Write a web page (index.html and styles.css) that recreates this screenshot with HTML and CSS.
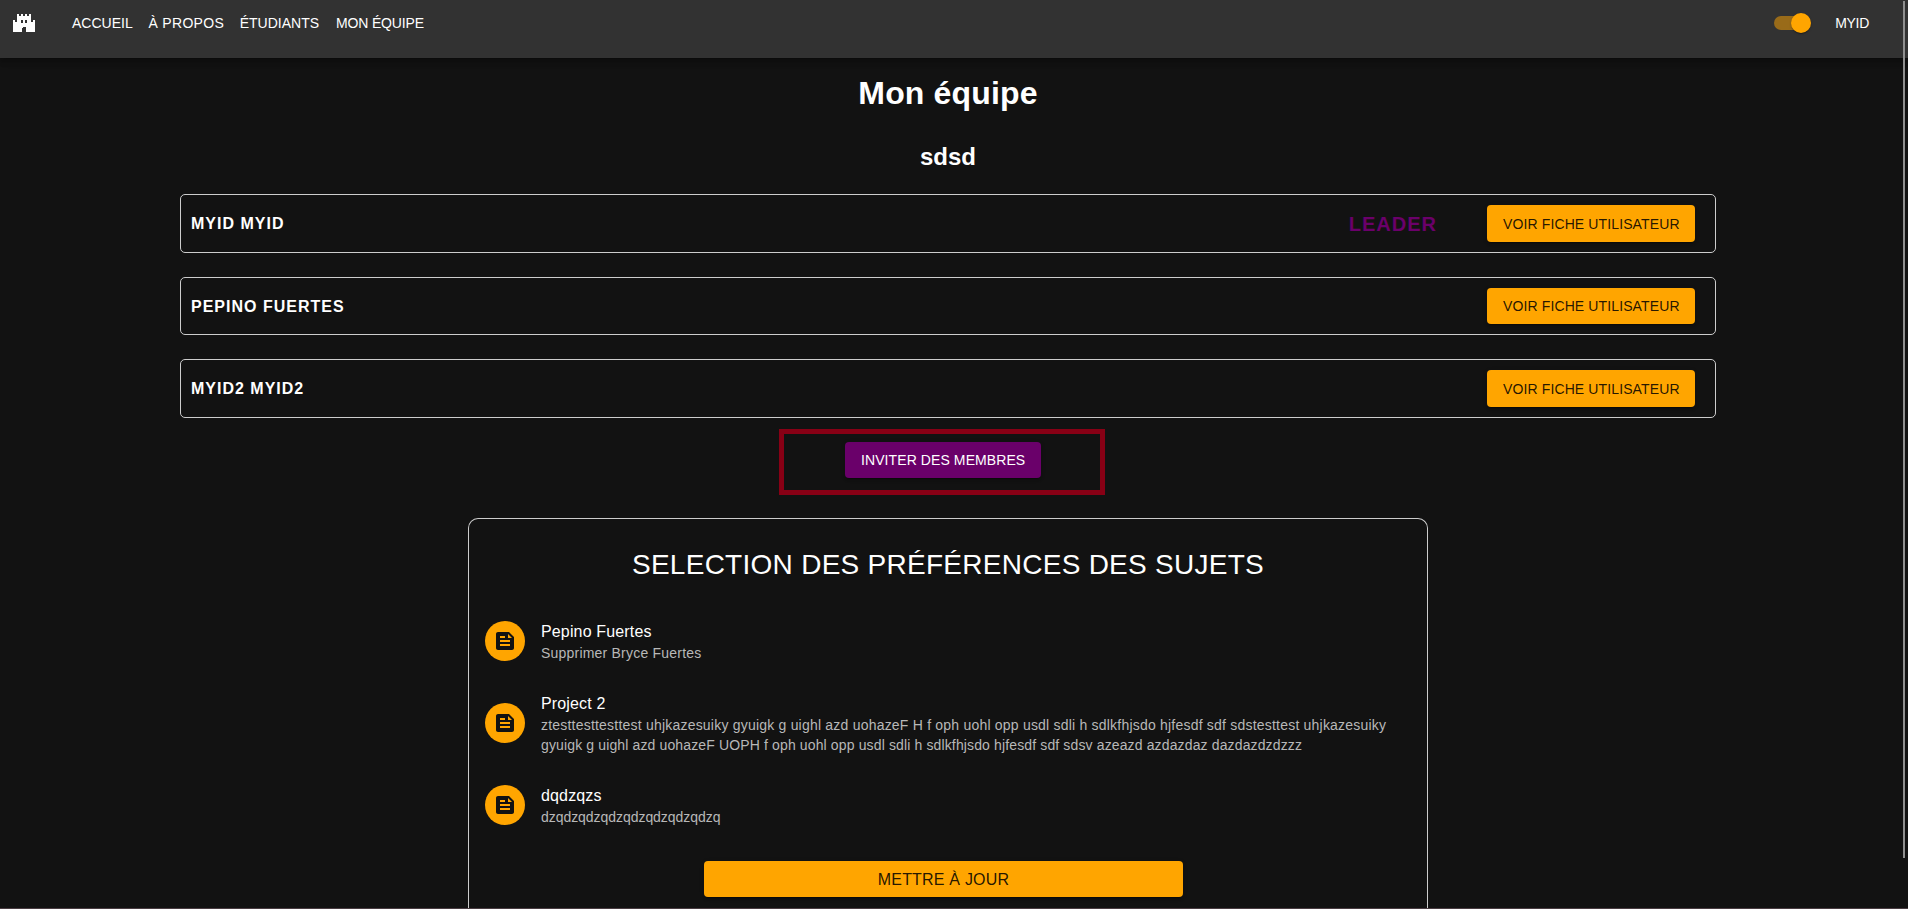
FILE: index.html
```html
<!DOCTYPE html>
<html lang="fr">
<head>
<meta charset="utf-8">
<title>Mon équipe</title>
<link rel="stylesheet" href="styles.css">
</head>
<body>
<header class="navbar">
  <a class="logo" aria-label="Accueil"><svg width="22" height="18" viewBox="0 0 22 18" shape-rendering="crispEdges"><path fill="#fff" fill-rule="evenodd" d="M4 0h2v2h2V0h2v2h2V0h2v2h2V0h2v8h2V6h2v12h-9v-4l-1-1h-2l-1 1v4H0V6h2v2h2zM8 6v3h2V6zM12 6v3h2V6z"/></svg></a>
  <nav class="links"><a>ACCUEIL</a><a class="about">À PROPOS</a><a>ÉTUDIANTS</a><a class="team">MON ÉQUIPE</a></nav>
  <span class="switch"><span class="thumb"></span></span>
  <a class="account">MYID</a>
</header>
<main class="page">
  <h1>Mon équipe</h1>
  <h2>sdsd</h2>
  <section class="members">
    <div class="member"><span class="name">MYID MYID</span><span class="leader">LEADER</span><button class="btn">VOIR FICHE UTILISATEUR</button></div>
    <div class="member"><span class="name">PEPINO FUERTES</span><button class="btn">VOIR FICHE UTILISATEUR</button></div>
    <div class="member"><span class="name">MYID2 MYID2</span><button class="btn">VOIR FICHE UTILISATEUR</button></div>
  </section>
  <div class="invite"><button class="btn invite-btn">INVITER DES MEMBRES</button></div>
  <section class="subjects">
    <h3>SELECTION DES PRÉFÉRENCES DES SUJETS</h3>
    <ul>
      <li><span class="avatar"><svg width="24" height="24" viewBox="0 0 24 24"><path d="M16 3H5c-1.100 0-2 .9-2 2v14c0 1.100.9 2 2 2h14c1.100 0 2-.9 2-2V8l-5-5zM7 7h5v2H7V7zm10 10H7v-2h10v2zm0-4H7v-2h10v2zm-2-4V5l4 4h-4z"/></svg></span><div class="text"><p class="title">Pepino Fuertes</p><p class="desc">Supprimer Bryce Fuertes</p></div></li>
      <li><span class="avatar"><svg width="24" height="24" viewBox="0 0 24 24"><path d="M16 3H5c-1.100 0-2 .9-2 2v14c0 1.100.9 2 2 2h14c1.100 0 2-.9 2-2V8l-5-5zM7 7h5v2H7V7zm10 10H7v-2h10v2zm0-4H7v-2h10v2zm-2-4V5l4 4h-4z"/></svg></span><div class="text"><p class="title">Project 2</p><p class="desc">ztesttesttesttest uhjkazesuiky gyuigk g uighl azd uohazeF H f oph uohl opp usdl sdli h sdlkfhjsdo hjfesdf sdf sdstesttest uhjkazesuiky gyuigk g uighl azd uohazeF UOPH f oph uohl opp usdl sdli h sdlkfhjsdo hjfesdf sdf sdsv azeazd azdazdaz dazdazdzdzzz</p></div></li>
      <li><span class="avatar"><svg width="24" height="24" viewBox="0 0 24 24"><path d="M16 3H5c-1.100 0-2 .9-2 2v14c0 1.100.9 2 2 2h14c1.100 0 2-.9 2-2V8l-5-5zM7 7h5v2H7V7zm10 10H7v-2h10v2zm0-4H7v-2h10v2zm-2-4V5l4 4h-4z"/></svg></span><div class="text"><p class="title">dqdzqzs</p><p class="desc tight">dzqdzqdzqdzqdzqdzqdzqdzq</p></div></li>
    </ul>
    <button class="btn update">METTRE À JOUR</button>
  </section>
</main>
<div class="scrollbar"></div>
<div class="bottom-edge"></div>
</body>
</html>
```

FILE: styles.css
```css
* { box-sizing: border-box; }
body {
  margin: 0;
  height: 909px;
  overflow: hidden;
  background: #121212;
  color: #fff;
  font-family: "Liberation Sans", Arial, sans-serif;
}
h1, h2, h3, p, ul { margin: 0; padding: 0; }
.navbar {
  position: relative;
  display: flex;
  align-items: flex-start;
  height: 58px;
  padding: 13px 39px 0 13px;
  background: #323232;
  box-shadow: 0 2px 4px -1px rgba(0,0,0,.2), 0 4px 5px rgba(0,0,0,.14), 0 1px 10px rgba(0,0,0,.12);
  font-size: 14px;
  line-height: 20px;
}
.logo { width: 59px; padding-top: 1px; line-height: 0; }
.links {
  display: grid;
  grid-template-columns: 76.500px 91.200px 96.300px auto;
  justify-content: start;
  flex: 1;
}
.about { letter-spacing: .3px; }
.team { letter-spacing: -.15px; }
.account { letter-spacing: -.3px; }
.switch {
  width: 34px;
  height: 14px;
  margin: 3px 27px 0 0;
  border-radius: 7px;
  background: #996b19;
}
.thumb {
  display: block;
  width: 20px;
  height: 20px;
  margin: -3px 0 0 17px;
  border-radius: 50%;
  background: #ffa500;
  box-shadow: 0 2px 1px -1px rgba(0,0,0,.2), 0 1px 1px rgba(0,0,0,.14), 0 1px 3px rgba(0,0,0,.12);
}
.page { width: 1536px; margin-left: 180px; }
h1 { padding-top: 16px; font-size: 32px; line-height: 38px; letter-spacing: .15px; text-align: center; }
h2 { padding-top: 31px; font-size: 24px; line-height: 28px; text-align: center; }
.members { display: flex; flex-direction: column; gap: 24px; margin-top: 23px; }
.member {
  display: flex;
  align-items: center;
  height: 58.5px;
  padding: 0 20px 0 10px;
  border: 1px solid #ccc;
  border-radius: 5px;
}
.name { flex: 1; padding-top: 2px; font-size: 16px; font-weight: 700; letter-spacing: 1px; }
.leader { margin-right: 50px; padding-top: 2px; color: #6a006a; font-size: 20px; font-weight: 700; letter-spacing: 1px; }
.btn {
  height: 36.5px;
  padding: 6.3px 16px 5.7px;
  border: 0;
  border-radius: 4px;
  background: #ffa500;
  color: rgba(0,0,0,.87);
  font: 14px/24.5px "Liberation Sans", Arial, sans-serif;
  letter-spacing: .12px;
  white-space: nowrap;
  box-shadow: 0 3px 1px -2px rgba(0,0,0,.2), 0 2px 2px rgba(0,0,0,.14), 0 1px 5px rgba(0,0,0,.12);
}
.member .btn { width: 208px; }
.member:nth-child(odd) .btn { padding: 7px 16px 5px; }
.invite {
  width: 326px;
  height: 66px;
  margin: 11.500px 0 0 599px;
  padding: 8px 0 0 61px;
  border: 5px solid #880015;
}
.invite-btn { display: block; width: 196px; height: 36px; background: #6a006a; color: #fff; letter-spacing: .09px; }
.subjects {
  width: 960px;
  height: 391px;
  margin: 23px auto 0;
  border: 1px solid #ccc;
  border-bottom: 0;
  border-radius: 10px 10px 0 0;
}
h3 { padding-top: 29px; font-size: 28px; font-weight: 400; line-height: 34px; letter-spacing: .27px; text-align: center; }
ul { padding: 23px 16px 0; list-style: none; }
li { display: flex; align-items: center; padding: 14px 0; }
.avatar {
  display: flex;
  align-items: center;
  justify-content: center;
  flex: none;
  width: 40px;
  height: 40px;
  margin-right: 16px;
  border-radius: 50%;
  background: #ffa500;
}
.avatar path { fill: #121212; }
.title { padding-top: 1px; font-size: 16px; line-height: 23px; letter-spacing: .15px; }
.desc { color: #b8b8b8; font-size: 14px; line-height: 20px; letter-spacing: .135px; }
.desc::first-line { letter-spacing: .21px; }
.tight::first-line { letter-spacing: -.05px; }
.update {
  display: block;
  width: 479px;
  height: 36px;
  margin: 20px 0 0 235px;
  padding: 7px 16px 4px;
  font-size: 16px;
  letter-spacing: .2px;
}
.scrollbar { position: absolute; top: 1px; left: 1903px; width: 2px; height: 857px; background: #8f8f8f; }
.bottom-edge { position: absolute; left: 0; top: 908px; width: 100%; height: 1px; background: #4a3d42; }
```
